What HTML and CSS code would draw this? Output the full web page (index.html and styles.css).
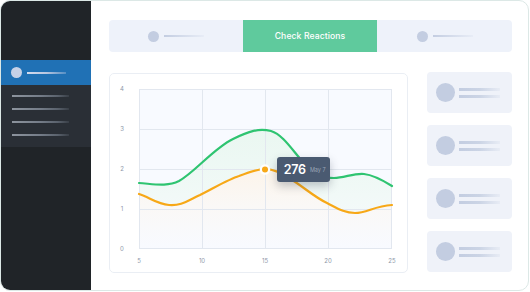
FILE: index.html
```html
<!DOCTYPE html>
<html>
<head>
<meta charset="utf-8">
<link rel="stylesheet" href="styles.css">
</head>
<body>
<div class="frame">
  <aside class="sidebar">
    <div class="nav-active">
      <span class="nav-dot"></span>
      <span class="nav-line"></span>
    </div>
    <div class="submenu">
      <span class="sub-line"></span>
      <span class="sub-line"></span>
      <span class="sub-line"></span>
      <span class="sub-line"></span>
    </div>
  </aside>
  <main class="main">
    <div class="tabs">
      <div class="tab"><span class="tab-dot"></span><span class="tab-line"></span></div>
      <div class="tab tab-active">Check Reactions</div>
      <div class="tab"><span class="tab-dot"></span><span class="tab-line"></span></div>
    </div>
    <div class="content">
      <div class="chart-card">
        <svg class="chart" width="299" height="200" viewBox="0 0 299 200">
          <defs>
            <linearGradient id="gfill" x1="0" y1="0" x2="0" y2="1" gradientUnits="objectBoundingBox">
              <stop offset="0" stop-color="#eaf7f1"/>
              <stop offset="0.55" stop-color="#f1f9f7"/>
              <stop offset="1" stop-color="#f8faff"/>
            </linearGradient>
            <linearGradient id="ofill" x1="0" y1="0" x2="0" y2="1" gradientUnits="objectBoundingBox">
              <stop offset="0" stop-color="#fcf4ea"/>
              <stop offset="0.45" stop-color="#faf8f6"/>
              <stop offset="1" stop-color="#f8faff"/>
            </linearGradient>
          </defs>
          <rect x="30" y="16" width="253" height="160" fill="#f8faff"/>
          <path d="M30,110 C45,111 58,114 70,108 C85,100 105,75 124,66 C140,58 150,55 162,58 C175,62 185,80 195,90 C205,100 212,105 225,105 C235,105 245,100 255,101 C265,102 275,108 283,113 L283,176 L30,176 Z" fill="url(#gfill)"/>
          <path d="M30,121 C40,124 48,131 60,132 C72,133 78,128 91,122 C105,115 120,106 130,103 C140,99 150,96 156,96 C165,96 172,100 180,105 C195,114 205,124 218,130 C228,135 235,140 246,140 C258,140 265,133 283,132 L283,176 L30,176 Z" fill="url(#ofill)"/>
          <g stroke="#e2e7ef" stroke-width="1" fill="none">
            <line x1="30" y1="56.5" x2="283" y2="56.5"/>
            <line x1="30" y1="96.5" x2="283" y2="96.5"/>
            <line x1="30" y1="136.5" x2="283" y2="136.5"/>
            <line x1="93.5" y1="16" x2="93.5" y2="176"/>
            <line x1="156.5" y1="16" x2="156.5" y2="176"/>
            <line x1="219.5" y1="16" x2="219.5" y2="176"/>
            <rect x="30.5" y="16.5" width="252" height="159"/>
          </g>
          <path d="M30,110 C45,111 58,114 70,108 C85,100 105,75 124,66 C140,58 150,55 162,58 C175,62 185,80 195,90 C205,100 212,105 225,105 C235,105 245,100 255,101 C265,102 275,108 283,113" fill="none" stroke="#2fc471" stroke-width="2.2" stroke-linecap="round"/>
          <path d="M30,121 C40,124 48,131 60,132 C72,133 78,128 91,122 C105,115 120,106 130,103 C140,99 150,96 156,96 C165,96 172,100 180,105 C195,114 205,124 218,130 C228,135 235,140 246,140 C258,140 265,133 283,132" fill="none" stroke="#f7a817" stroke-width="2.2" stroke-linecap="round"/>
          <circle cx="156" cy="96.5" r="5.2" fill="#ffffff"/>
          <circle cx="156" cy="96.5" r="3" fill="#f7a817"/>
          <g class="axis">
            <text x="13" y="18" text-anchor="middle">4</text>
            <text x="13" y="58" text-anchor="middle">3</text>
            <text x="13" y="98" text-anchor="middle">2</text>
            <text x="13" y="138" text-anchor="middle">1</text>
            <text x="13" y="178" text-anchor="middle">0</text>
            <text x="30" y="190" text-anchor="middle">5</text>
            <text x="93" y="190" text-anchor="middle">10</text>
            <text x="156" y="190" text-anchor="middle">15</text>
            <text x="219" y="190" text-anchor="middle">20</text>
            <text x="283" y="190" text-anchor="middle">25</text>
          </g>
        </svg>
        <div class="tooltip"><span class="tip-value">276</span><span class="tip-date">May 7</span></div>
      </div>
      <div class="cards">
        <div class="card"><span class="card-dot"></span><span class="card-lines"><span class="card-line"></span><span class="card-line"></span></span></div>
        <div class="card"><span class="card-dot"></span><span class="card-lines"><span class="card-line"></span><span class="card-line"></span></span></div>
        <div class="card"><span class="card-dot"></span><span class="card-lines"><span class="card-line"></span><span class="card-line"></span></span></div>
        <div class="card"><span class="card-dot"></span><span class="card-lines"><span class="card-line"></span><span class="card-line"></span></span></div>
      </div>
    </div>
  </main>
</div>
</body>
</html>
```

FILE: styles.css
```css
* { box-sizing: border-box; }
html, body { margin: 0; padding: 0; background: #ffffff; }
body { font-family: "Inter", "Open Sans", sans-serif; width: 530px; height: 292px; overflow: hidden; }

.frame {
  width: 529px;
  height: 291px;
  border: 1px solid #dce8e6;
  border-radius: 10px;
  overflow: hidden;
  display: flex;
  background: #ffffff;
}

.sidebar {
  width: 90px;
  flex: none;
  background: #202428;
  padding-top: 59px;
}
.nav-active {
  height: 25px;
  background: #2071b5;
  display: flex;
  align-items: center;
  padding-left: 10px;
  gap: 5px;
}
.nav-dot {
  width: 11px; height: 11px;
  border-radius: 50%;
  background: #c6d1e7;
}
.nav-line {
  width: 39px; height: 2px;
  background: linear-gradient(90deg, #d3dcef 0%, #b8c6e0 50%, rgba(184,198,224,0.35) 100%);
}
.submenu {
  height: 62px;
  background: #2a2f36;
  padding: 10px 0 0 11px;
  display: flex;
  flex-direction: column;
  gap: 11px;
}
.sub-line {
  width: 57px; height: 2px;
  background: linear-gradient(90deg, #8d949e 0%, #747c88 50%, #5a626d 80%, rgba(90,98,109,0.3) 100%);
}

.main {
  flex: 1;
  padding: 19px 16px 0 18px;
}
.tabs {
  height: 32px;
  background: #eef2fa;
  border-radius: 4px;
  display: grid;
  grid-template-columns: 134px 134px 1fr;
  overflow: hidden;
}
.tab {
  display: flex;
  align-items: center;
  justify-content: center;
  gap: 5px;
}
.tab-dot {
  width: 11px; height: 11px;
  border-radius: 50%;
  background: #c3cde1;
}
.tab-line {
  width: 40px; height: 2px;
  background: linear-gradient(90deg, #c3cde1 0%, rgba(195,205,225,0.15) 100%);
}
.tab-active {
  background: #5fca9d;
  color: #ffffff;
  font-size: 8.6px;
  font-weight: 500;
  letter-spacing: 0.1px;
}

.content {
  margin-top: 21px;
  display: flex;
  gap: 19px;
}
.chart-card {
  position: relative;
  width: 299px;
  height: 200px;
  border: 1px solid #eaeef4;
  border-radius: 5px;
  background: #ffffff;
  flex: none;
}
.chart {
  display: block;
  position: absolute;
  left: -1px;
  top: -1px;
}
.axis text {
  font-family: "Inter", "Open Sans", sans-serif;
  font-size: 6px;
  fill: #8e98a9;
}
.tooltip {
  position: absolute;
  left: 166.7px;
  top: 82.7px;
  width: 53px;
  height: 25px;
  border-radius: 3px;
  background: #4a5a71;
  box-shadow: 0 4px 10px rgba(40,52,70,0.28);
  display: flex;
  align-items: center;
  padding-left: 7px;
  gap: 4px;
}
.tip-value {
  color: #ffffff;
  font-size: 12.5px;
  font-weight: 600;
  letter-spacing: -0.2px;
}
.tip-date {
  color: #9aa5b6;
  font-size: 5.5px;
  margin-top: 1px;
}

.cards {
  width: 85px;
  margin-top: -1px;
  display: flex;
  flex-direction: column;
  gap: 12px;
}
.card {
  height: 41px;
  background: #eff2f9;
  border-radius: 4px;
  display: flex;
  align-items: center;
  padding-left: 9px;
  gap: 4px;
}
.card-dot {
  width: 19px; height: 19px;
  border-radius: 50%;
  background: #c3cde1;
  flex: none;
}
.card-lines {
  display: flex;
  flex-direction: column;
  gap: 4px;
}
.card-line {
  width: 41px; height: 3px;
  background: linear-gradient(90deg, #c3cde1 0%, #cbd4e5 50%, rgba(203,212,229,0.2) 100%);
}
```
